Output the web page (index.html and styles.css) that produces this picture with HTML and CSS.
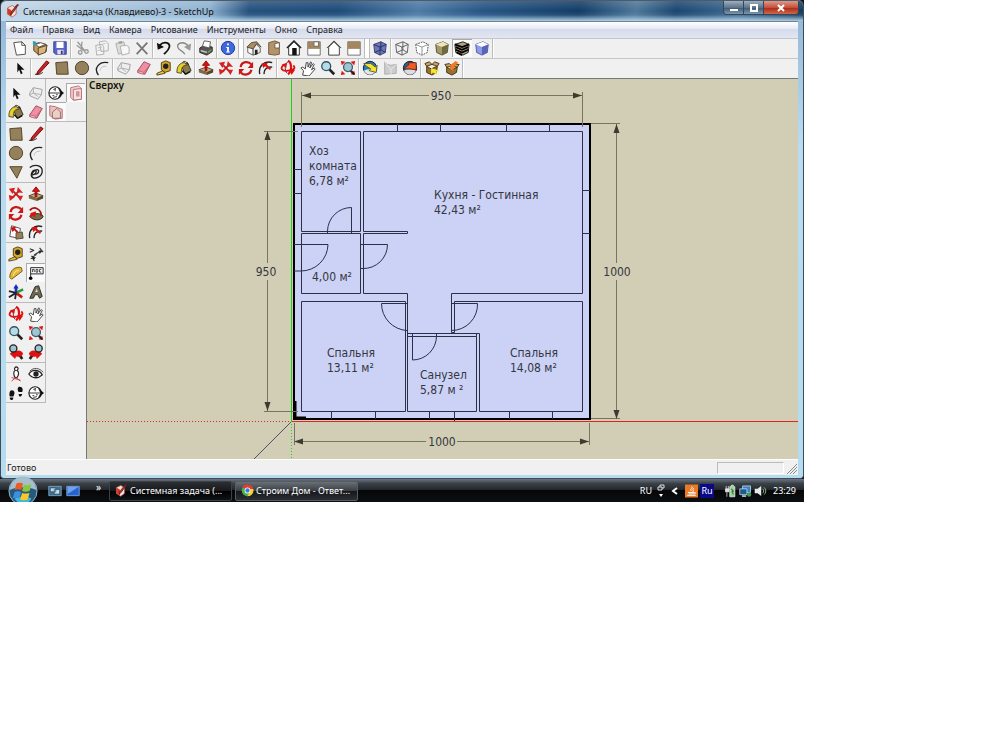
FILE: index.html
```
<!DOCTYPE html>
<html lang="ru">
<head>
    <meta charset="UTF-8">
    <meta name="viewport" content="width=device-width, initial-scale=1.0">
    <title>Системная задача (Клавдиево)-3 - SketchUp</title>
    <link rel="stylesheet" href="styles.css">
</head>
<body>
    <!-- icon set, 18x18 grid -->
    <svg class="sprite" aria-hidden="true">
        <symbol id="i-app" viewBox="0 0 18 18"><path d="M2 5l6-3 5 3v8l-5 4-6-4z" fill="#f6e4de" stroke="#b55"/><path d="M2 5l5 3v8l-5-3z" fill="#d43a22"/><path d="M16 1L9 11l-3 3 1-4 7-9z" fill="#c43a28" stroke="#511"/></symbol>
        <symbol id="i-new" viewBox="0 0 18 18"><path d="M2 3l9-1 4 4v10l-10 1z" fill="#fff" stroke="#444"/><path d="M11 2v4h4" fill="none" stroke="#444"/></symbol>
        <symbol id="i-open" viewBox="0 0 18 18"><path d="M2 6l5-3 9 2v8l-9 3-5-4z" fill="#c39a5b" stroke="#4b3820"/><path d="M4 5l6-2 5 2-7 3z" fill="#fff" stroke="#555"/><path d="M7 9l10-3-2 8-8 3z" fill="#d9b77c" stroke="#4b3820"/><path d="M1 1l4 1-1 5-3-2z" fill="#2a9fb5"/></symbol>
        <symbol id="i-save" viewBox="0 0 18 18"><path d="M2 2h14v14H4l-2-2z" fill="#5a63c8" stroke="#30388c"/><path d="M5 2h8v7H5z" fill="#fff"/><path d="M6 11h7v5H6z" fill="#dde"/><path d="M10 12h2v4h-2z" fill="#30388c"/></symbol>
        <symbol id="i-cut" viewBox="0 0 18 18"><path d="M4 2l8 10M9 2l-1 9M3 6l8 6" fill="none" stroke="#999" stroke-width="1.5"/><circle cx="7" cy="14" r="2" fill="none" stroke="#999" stroke-width="1.5"/><circle cx="14" cy="13" r="2" fill="none" stroke="#999" stroke-width="1.5"/></symbol>
        <symbol id="i-copy" viewBox="0 0 18 18"><path d="M6 2l7-1 3 3v8l-8 1zM2 6l7-1 2 3v8l-8 1z" fill="#f4f4f4" stroke="#aaa"/><path d="M4 9l5-1M4 12l5-1M8 5l5-1" stroke="#bbb"/></symbol>
        <symbol id="i-paste" viewBox="0 0 18 18"><path d="M2 4l9-2 3 11-9 3z" fill="#ddd" stroke="#aaa"/><path d="M7 7l7-1 3 2v7l-8 2z" fill="#f8f8f8" stroke="#aaa"/><path d="M5 2l4-1v3H5z" fill="#999"/></symbol>
        <symbol id="i-del" viewBox="0 0 18 18"><path d="M3 3l12 13M15 3L3 16" stroke="#777" stroke-width="2"/></symbol>
        <symbol id="i-undo" viewBox="0 0 18 18"><path d="M4 6c6-6 12-2 11 2s-4 6-6 8" fill="none" stroke="#111" stroke-width="2"/><path d="M1 3l1 8 7-3z" fill="#111"/></symbol>
        <symbol id="i-redo" viewBox="0 0 18 18"><path d="M14 7C8 0 1 4 2 8s5 3 8 8" fill="none" stroke="#888" stroke-width="1.5"/><path d="M17 4l-1 8-7-4z" fill="#999"/></symbol>
        <symbol id="i-print" viewBox="0 0 18 18"><path d="M2 9l5-3 9 2v5l-6 4-8-3z" fill="#555" stroke="#222"/><path d="M5 7l2-6 7 1-1 7z" fill="#fff" stroke="#555"/><path d="M3 11l7 2v2l-7-2z" fill="#bbb"/><path d="M11 13l4-3v2l-4 3z" fill="#7a9a4a"/></symbol>
        <symbol id="i-info" viewBox="0 0 18 18"><circle cx="9" cy="9" r="7.5" fill="#3d68e0" stroke="#1d358f"/><path d="M8 4h2v2H8zM7 8h3v5h1v1H7v-1h1V9H7z" fill="#fff"/></symbol>
        <symbol id="i-iso" viewBox="0 0 18 18"><path d="M2 8v6l6 3V9z" fill="#fff" stroke="#555"/><path d="M8 9l4-4 4 4v5l-8 3z" fill="#eee" stroke="#555"/><path d="M1 8l5-5 6-1 5 6-5-4-4 6z" fill="#a78c66" stroke="#554430"/><path d="M10 11h3v5l-3 1z" fill="#222"/></symbol>
        <symbol id="i-top" viewBox="0 0 18 18"><path d="M3 3l7-2 5 2v13l-5 1-7-1z" fill="#b3946a" stroke="#6a5436"/><path d="M10 4l5-1v6h-5z" fill="#fff" stroke="#6a5436"/></symbol>
        <symbol id="i-front" viewBox="0 0 18 18"><path d="M3 8l6-6 6 6v9H3z" fill="#fff" stroke="#222"/><path d="M1 9l8-8 8 8" fill="none" stroke="#222" stroke-width="1.5"/><path d="M7 9h5v8H7z" fill="#111"/></symbol>
        <symbol id="i-right" viewBox="0 0 18 18"><path d="M2 2h14v15H2z" fill="#fff" stroke="#666"/><path d="M2 2h14v8H2z" fill="#a5875f"/><path d="M9 2h5v5H9z" fill="#fff" stroke="#666"/></symbol>
        <symbol id="i-back" viewBox="0 0 18 18"><path d="M3 8l6-6 6 6v9H3z" fill="#fff" stroke="#333"/><path d="M1 9l8-8 8 8" fill="none" stroke="#333"/></symbol>
        <symbol id="i-left" viewBox="0 0 18 18"><path d="M2 2h14v15H2z" fill="#fff" stroke="#666"/><path d="M2 2h14v8H2z" fill="#a5875f"/></symbol>
        <symbol id="i-xray" viewBox="0 0 18 18"><path d="M2 5l8-3 6 3-1 9-6 3-6-3z" fill="#6d78b8" stroke="#333a6e"/><path d="M2 5l7 3 7-3M9 8v9M10 2v9l-7 3M10 11l5 3" fill="none" stroke="#232a5e"/></symbol>
        <symbol id="i-wire" viewBox="0 0 18 18"><path d="M2 5l8-3 6 3-1 9-6 3-6-3zM2 5l7 3 7-3M9 8v9M10 2v9l-7 3M10 11l5 3" fill="none" stroke="#555"/></symbol>
        <symbol id="i-hidden" viewBox="0 0 18 18"><path d="M2 5l8-3 6 3-1 9-6 3-6-3z" fill="#fff" stroke="#444" stroke-dasharray="2 1"/><path d="M2 5l7 3 7-3M9 8v9" fill="none" stroke="#888"/></symbol>
        <symbol id="i-shade" viewBox="0 0 18 18"><path d="M2 5l8-3 6 3-1 9-6 3-6-3z" fill="#a59a66" stroke="#4d4828"/><path d="M2 5l8-3 6 3-7 3z" fill="#ece6b8"/><path d="M9 8l7-3-1 9-6 3z" fill="#6f6845"/></symbol>
        <symbol id="i-tex" viewBox="0 0 18 18"><path d="M1 5l9-3 7 3-1 9-6 3-8-3z" fill="#b0a080" stroke="#111"/><path d="M1 5l8 3 8-3M2 8l7 3 7-3M2 11l7 3 7-3M3 14l6 3" fill="none" stroke="#000" stroke-width="2"/></symbol>
        <symbol id="i-mono" viewBox="0 0 18 18"><path d="M2 5l8-3 6 3-1 9-6 3-6-3z" fill="#8f9be8" stroke="#4a54a8"/><path d="M2 5l8-3 6 3-7 3z" fill="#fff"/><path d="M9 8l7-3-1 9-6 3z" fill="#5966b8"/></symbol>
        <symbol id="i-select" viewBox="0 0 18 18"><path d="M6 3v11l2-3 2 5 2-1-2-4h4z" fill="#111"/></symbol>
        <symbol id="i-line" viewBox="0 0 18 18"><path d="M4 13L14 1l3 2L6 15l-3 1z" fill="#c22" stroke="#600"/><path d="M1 16c3 1 6 0 9-2" fill="none" stroke="#222"/></symbol>
        <symbol id="i-rect" viewBox="0 0 18 18"><path d="M2 3l13-1 1 14H3z" fill="#94805a" stroke="#4a3b20"/></symbol>
        <symbol id="i-circle" viewBox="0 0 18 18"><circle cx="9" cy="9" r="7.5" fill="#94805a" stroke="#4a3b20"/></symbol>
        <symbol id="i-arc" viewBox="0 0 18 18"><path d="M5 17C-1 9 6 1 16 3" fill="none" stroke="#222" stroke-width="1.5"/><path d="M7 12c0-4 3-5 7-5" fill="none" stroke="#bbb"/></symbol>
        <symbol id="i-comp" viewBox="0 0 18 18"><path d="M2 9l4-6 10 2-1 6-4 5-9-4z" fill="#eee" stroke="#999"/><path d="M6 3v6l9 2M6 9l-4 2M6 9l5 4" fill="none" stroke="#aaa"/></symbol>
        <symbol id="i-erase" viewBox="0 0 18 18"><path d="M2 12l7-10 7 3-6 11-8-2z" fill="#ef8fa6" stroke="#9c4459"/><path d="M2 12l7 2-1 2-6-2zM9 14l7-9" fill="#fbd" stroke="#b66"/></symbol>
        <symbol id="i-tape" viewBox="0 0 18 18"><path d="M6 3l5-2 5 2v9l-6 2-4-3z" fill="#d6a62a" stroke="#4b3908"/><circle cx="11" cy="7" r="3" fill="#222"/><path d="M8 12l-7 3v2l9-2z" fill="#e8c84a" stroke="#4b3908"/></symbol>
        <symbol id="i-paint" viewBox="0 0 18 18"><path d="M6 6l7-3 4 9-7 4z" fill="#887a4c" stroke="#2d2811"/><path d="M1 14c0-7 3-11 9-11l2 3c-5 0-6 3-6 9z" fill="#e7cf2c" stroke="#4a4310"/><path d="M7 3c2-3 6-1 7 3" fill="none" stroke="#222"/><path d="M7 12l4 4 5-3" fill="none" stroke="#111" stroke-width="1.5"/></symbol>
        <symbol id="i-push" viewBox="0 0 18 18"><path d="M1 11l8-3 8 3-7 3z" fill="#c5ae83" stroke="#4b3c20"/><path d="M1 11l9 3v3l-9-3z" fill="#7c6947"/><path d="M10 14l7-3v3l-7 3z" fill="#544527"/><path d="M8 12V6H5l4-5 4 5h-3v6z" fill="#d11" stroke="#900"/></symbol>
        <symbol id="i-move" viewBox="0 0 18 18"><path d="M6 6l6 6M13 5l-8 8" stroke="#c01818" stroke-width="2"/><path d="M1 3l7-1-3 7zM11 1l6 7-7-1zM17 11l-3 6-4-6zM1 10l7 2-6 5z" fill="#d82020"/></symbol>
        <symbol id="i-rotate" viewBox="0 0 18 18"><path d="M3 8c1-7 9-7 12-3M15 11c-1 6-9 7-12 3" fill="none" stroke="#c91818" stroke-width="2.5"/><path d="M17 2v7h-6zM1 17v-7h6z" fill="#c91818"/></symbol>
        <symbol id="i-offset" viewBox="0 0 18 18"><path d="M2 16C0 7 7 0 16 3M7 16c-1-5 3-9 9-8" fill="none" stroke="#222" stroke-width="1.5"/><path d="M4 4l7-1-1 2 5 5-2 1-5-4-2 2z" fill="#d11"/></symbol>
        <symbol id="i-follow" viewBox="0 0 18 18"><path d="M2 13c0-4 14-5 15 0-2 5-11 5-15 0z" fill="#756c45" stroke="#29240f"/><path d="M2 6c5-6 13-1 13 6" fill="none" stroke="#a11" stroke-width="2"/><path d="M3 9l6-2-1 7-2-2-4 2z" fill="#d11"/></symbol>
        <symbol id="i-scale" viewBox="0 0 18 18"><path d="M4 2l10 3-2 11-10-2z" fill="#fff" stroke="#444"/><path d="M9 10l7-1 1 7-8 1z" fill="#94805a" stroke="#544527"/><path d="M3 4l6-1-1 2 4 4-2 1-3-3-2 2z" fill="#c11"/></symbol>
        <symbol id="i-orbit" viewBox="0 0 18 18"><path d="M9 1c4 1 5 12 0 15" fill="none" stroke="#d11" stroke-width="2.5"/><path d="M9 2C5 4 5 12 8 15" fill="none" stroke="#611"/><path d="M5 5c-6 4-3 8 4 7 6 0 9-3 6-6" fill="none" stroke="#d11" stroke-width="2"/><path d="M2 5l6-2-1 6zM11 10l6 1-4 6z" fill="#d11"/></symbol>
        <symbol id="i-pan" viewBox="0 0 18 18"><path d="M3 17l1-5-3-3 2-1 3 2 1-7 2 0v5l3-6 1 1-2 6 4-5 1 1-3 6 3-2 1 1-5 6-2 2z" fill="#fff" stroke="#333"/></symbol>
        <symbol id="i-zoom" viewBox="0 0 18 18"><path d="M10 10l6 6" stroke="#222" stroke-width="3"/><circle cx="7" cy="7" r="5" fill="#b4dce8" stroke="#36505e" stroke-width="1.5"/></symbol>
        <symbol id="i-extents" viewBox="0 0 18 18"><path d="M1 1l5 1-4 4zM17 1l-1 5-4-4zM1 17l1-5 4 4zM17 17l-5-1 4-4z" fill="#d11"/><path d="M11 11l5 5" stroke="#222" stroke-width="2.5"/><circle cx="9" cy="8" r="5" fill="#9cc7d2" stroke="#465a66" stroke-width="1.5"/></symbol>
        <symbol id="i-getmap" viewBox="0 0 18 18"><circle cx="9" cy="9" r="7.5" fill="#2679bb" stroke="#112"/><path d="M2 12c4-2 9-2 14 0-4 6-10 6-14 0z" fill="#dfe8e6"/><path d="M2 4l8 0 5 4 2-2-1 8-8-2 2-2-5-3z" fill="#f7e52d" stroke="#553"/></symbol>
        <symbol id="i-terrain" viewBox="0 0 18 18"><path d="M3 2l3 3 4 1 6-1v10l-13 1z" fill="#ccc" stroke="#aaa"/><path d="M3 2l7 9 6-6M10 11v5" fill="none" stroke="#eee"/></symbol>
        <symbol id="i-place" viewBox="0 0 18 18"><circle cx="9" cy="9" r="7.5" fill="#23648f" stroke="#112"/><path d="M2 12c4-2 9-2 14 0-4 6-10 6-14 0z" fill="#ddd"/><path d="M16 3l-9 0 1 2-6 5 7 0 7 1z" fill="#ef5c24" stroke="#622"/></symbol>
        <symbol id="i-getmod" viewBox="0 0 18 18"><path d="M3 7l5 3 7-3-1 7-5 3-6-3z" fill="#977133" stroke="#3e2b0d"/><path d="M3 7L1 4l5-2 3 3 3-3 5 2-2 3-6-2z" fill="#c9a55e" stroke="#3e2b0d"/><path d="M8 9l9 3-3 1 1 4-5-3-2 2z" fill="#f6e72c"/></symbol>
        <symbol id="i-share" viewBox="0 0 18 18"><path d="M3 8l5 3 7-3-1 6-5 3-6-3z" fill="#977133" stroke="#3e2b0d"/><path d="M3 8L1 5l5-1 3 3 3-2 5 0-2 3-6-1z" fill="#c9a55e" stroke="#3e2b0d"/><path d="M6 10l2-5 5-4 3 2-4 4-2 5z" fill="#ee7b23"/></symbol>
        <symbol id="i-section" viewBox="0 0 18 18"><circle cx="8" cy="9" r="7" fill="#fff" stroke="#222" stroke-width="1.3"/><path d="M1 9h14M8 4v3M6 5l3-1M5 12h2M9 11h2M6 14l4-1" stroke="#222"/><path d="M11 3l7 6-7 6 3-6z" fill="#111"/></symbol>
        <symbol id="i-plane" viewBox="0 0 18 18"><path d="M3 3l9-2 3 3v12l-9 1-3-3z" fill="#f7ced1" stroke="#b56a70"/><path d="M6 5l9-1v12l-9 1z" fill="#f9e3e3" stroke="#b56a70"/><path d="M9 7h4v6H9z" fill="#cc9999"/></symbol>
        <symbol id="i-cutplane" viewBox="0 0 18 18"><path d="M2 2l6 1 8 3v10l-8 1-6-4z" fill="#f1c0c3" stroke="#b0646a"/><path d="M5 9l5-4 4 4v7H5z" fill="#e8d2c4" stroke="#966"/></symbol>
        <symbol id="i-poly" viewBox="0 0 18 18"><path d="M2 3h14L10 16z" fill="#94805a" stroke="#4a3b20"/></symbol>
        <symbol id="i-free" viewBox="0 0 18 18"><path d="M2 4c5-4 14-3 14 4s-8 9-11 7 0-9 3-8 0 6-4 5c3-6 8-7 8-4s-3 4-4 3" fill="none" stroke="#222" stroke-width="1.5"/></symbol>
        <symbol id="i-dim" viewBox="0 0 18 18"><path d="M2 3l5 2M2 7l4-2M7 10l8-5M4 11l3 6M13 2l4 5M3 14l7-5" fill="none" stroke="#333" stroke-width="1.3"/><path d="M5 12l4 1-3 3zM12 5l4 1-3 3z" fill="#222"/></symbol>
        <symbol id="i-prot" viewBox="0 0 18 18"><path d="M2 14C2 6 8 1 15 3l1 4-12 9z" fill="#e2b83b" stroke="#70540d"/><path d="M6 12c0-3 3-6 6-6" fill="none" stroke="#fff4b0"/></symbol>
        <symbol id="i-text" viewBox="0 0 18 18"><path d="M3 3h14v7H3z" fill="#fff" stroke="#111"/><path d="M5 8V5h2v3M9 5h2v3H9zM15 5h-2v3h2" fill="none" stroke="#333"/><path d="M3 10v4" stroke="#111"/><circle cx="3" cy="15" r="2"/></symbol>
        <symbol id="i-axes" viewBox="0 0 18 18"><path d="M9 10V3" stroke="#1a2ac8" stroke-width="3"/><path d="M9 0l3 5H6z" fill="#1a2ac8"/><path d="M9 10l7 5" stroke="#c11" stroke-width="3"/><path d="M9 10l8-4" stroke="#2a9a30" stroke-width="3"/><path d="M1 15l8-5-1 7M1 8l8 2" fill="none" stroke="#223" stroke-width="2"/></symbol>
        <symbol id="i-3dtext" viewBox="0 0 18 18"><path d="M2 16L8 3l4-1 4 12-3 2-2-4H8l-2 4z" fill="#6f6a55" stroke="#25221a"/><path d="M8 9l2-4 1 4z" fill="#ddd"/></symbol>
        <symbol id="i-prev" viewBox="0 0 18 18"><path d="M12 11l4 6" stroke="#222" stroke-width="3"/><path d="M2 11l6-5v2c5-2 8 0 9 3-1 3-4 4-8 3l-1 3z" fill="#d11"/><circle cx="6" cy="5" r="4" fill="#9cc7d2" stroke="#222" stroke-width="1.5"/></symbol>
        <symbol id="i-next" viewBox="0 0 18 18"><path d="M6 11l-4 6" stroke="#222" stroke-width="3"/><path d="M16 11l-6-5v2C5 6 2 8 1 11c1 3 4 4 8 3l1 3z" fill="#d11"/><circle cx="12" cy="5" r="4" fill="#9cc7d2" stroke="#222" stroke-width="1.5"/></symbol>
        <symbol id="i-cam" viewBox="0 0 18 18"><path d="M9 1c3 0 3 3 1 4 3 1 2 6 0 8H8c-2-3-2-7 0-8-1-1-1-3 1-4z" fill="#fff" stroke="#222" stroke-width="1.3"/><path d="M4 17l5-4 5 4M4 13l10 3" fill="none" stroke="#c33"/></symbol>
        <symbol id="i-look" viewBox="0 0 18 18"><path d="M1 9c4-6 12-5 15 1-4 4-11 5-15-1z" fill="#fff" stroke="#222" stroke-width="1.5"/><circle cx="9" cy="9" r="3" fill="#222"/><path d="M2 6c4-5 11-4 15 1" fill="none" stroke="#444"/></symbol>
        <symbol id="i-walk" viewBox="0 0 18 18"><path d="M4 6c4 0 4 4 2 7H2C1 10 2 6 4 6zM2 14h4c0 4-4 4-4 0zM13 2c4 0 4 4 3 6h-4c-2-3-1-6 1-6zM12 10h4c-1 4-4 4-4 0z" fill="#111"/></symbol>
        <symbol id="i-orb" viewBox="0 0 32 32"><circle cx="16" cy="16" r="15" fill="#245a80" stroke="#9fc0d2"/><path d="M2 15a14 14 0 0 1 28 0c-8-4-20-4-28 0z" fill="#a7bfcb"/><path d="M7 24c5 8 14 8 18 0-5-3-13-3-18 0z" fill="#42b8dc"/><path d="M9 8c2-1 5-1 7 0l-2 7c-2-1-5-1-7 0z" fill="#ee5a24"/><path d="M17 9c2 1 5 1 8 0l-2 7c-3 1-6 1-8 0z" fill="#8cc63e"/><path d="M7 17c2-1 5-1 7 0l-2 7c-2-1-5-1-7 0z" fill="#3d8fe0"/><path d="M15 18c2 1 5 1 8 0l-2 7c-3 1-6 1-8 0z" fill="#fbc926"/></symbol>
        <symbol id="i-windows" viewBox="0 0 18 18"><path d="M1 3h16v12H1z" fill="#3d6d94" stroke="#8cb0c8"/><path d="M3 5h7v5H3zM8 7h7v6H8z" fill="#c5dbe6" stroke="#34566f"/></symbol>
        <symbol id="i-desktop" viewBox="0 0 18 18"><path d="M1 3h16v12H1z" fill="#2563d0" stroke="#8cb6e8"/><path d="M2 4h14L2 13z" fill="#70a2ef"/></symbol>
        <symbol id="i-chrome" viewBox="0 0 18 18"><circle cx="9" cy="9" r="8" fill="#4cae4f"/><path d="M2 5a8 8 0 0 1 15 3H9z" fill="#e33b2e"/><path d="M17 7a8 8 0 0 1-8 10l4-8-3-2z" fill="#fbd02d"/><circle cx="9" cy="9" r="4" fill="#fff"/><circle cx="9" cy="9" r="3" fill="#3b78e0"/></symbol>
        <symbol id="i-java" viewBox="0 0 18 18"><path d="M0 0h18v18H0z" fill="#ea7a25"/><path d="M9 3c4 2-4 3 0 6M12 5c-3 2 1 3-1 5M4 11h9M5 13h7M3 15h12M13 11c3 0 2 2-1 2" fill="none" stroke="#fff" stroke-width="1.3"/></symbol>
        <symbol id="i-power" viewBox="0 0 18 18"><path d="M8 3h2V1h3v2h2v14H8z" fill="#9fd0a0" stroke="#e4f4e4"/><path d="M10 6l3 3-2 1 2 4" fill="none" stroke="#2a7a34" stroke-width="1.5"/><path d="M3 2v4M6 2v4M2 6h5v4H2zM4 10v7" stroke="#eee" fill="#ddd"/></symbol>
        <symbol id="i-net" viewBox="0 0 18 18"><path d="M5 2h11v9H5z" fill="#3a83c0" stroke="#d5e8f4"/><path d="M1 6h10v8H1z" fill="#1c5a94" stroke="#d5e8f4"/><path d="M4 16h6" stroke="#d5e8f4" stroke-width="2"/><circle cx="14" cy="14" r="3" fill="#3f9c55"/></symbol>
        <symbol id="i-sound" viewBox="0 0 18 18"><path d="M1 6h4l5-4v14l-5-4H1z" fill="#e8e8e8"/><path d="M12 6c2 2 2 4 0 6M14 4c3 3 3 7 0 10" fill="none" stroke="#9c9" stroke-width="1.2"/></symbol>
    </svg>

    <div class="desktop">
        <main class="window">
            <header class="titlebar">
                <svg class="app-icon"><use href="#i-app"/></svg>
                <h1>Системная задача (Клавдиево)-3 - SketchUp</h1>
                <div class="window-buttons">
                    <button class="min" aria-label="Свернуть"><svg viewBox="0 0 10 10"><path d="M1 6h8v2H1z" fill="#fff"/></svg></button>
                    <button class="max" aria-label="Развернуть"><svg viewBox="0 0 10 10"><path d="M2 2h6v6H2z" fill="none" stroke="#fff" stroke-width="2"/></svg></button>
                    <button class="close" aria-label="Закрыть"><svg viewBox="0 0 10 10"><path d="M2 2l6 6M8 2L2 8" stroke="#fff" stroke-width="2"/></svg></button>
                </div>
            </header>

            <nav class="menu">
                <a href="#">Файл</a>
                <a href="#">Правка</a>
                <a href="#">Вид</a>
                <a href="#">Камера</a>
                <a href="#">Рисование</a>
                <a href="#">Инструменты</a>
                <a href="#">Окно</a>
                <a href="#">Справка</a>
            </nav>

            <div class="toolbar">
                <button aria-label="Создать"><svg><use href="#i-new"/></svg></button>
                <button aria-label="Открыть"><svg><use href="#i-open"/></svg></button>
                <button aria-label="Сохранить"><svg><use href="#i-save"/></svg></button>
                <span class="sep"></span>
                <button aria-label="Вырезать"><svg><use href="#i-cut"/></svg></button>
                <button aria-label="Копировать"><svg><use href="#i-copy"/></svg></button>
                <button aria-label="Вставить"><svg><use href="#i-paste"/></svg></button>
                <button aria-label="Удалить"><svg><use href="#i-del"/></svg></button>
                <span class="sep"></span>
                <button aria-label="Отменить"><svg><use href="#i-undo"/></svg></button>
                <button aria-label="Повторить"><svg><use href="#i-redo"/></svg></button>
                <span class="sep"></span>
                <button aria-label="Печать"><svg><use href="#i-print"/></svg></button>
                <span class="sep"></span>
                <button aria-label="Сведения о модели"><svg><use href="#i-info"/></svg></button>
                <span class="sep wide"></span>
                <button aria-label="Изометрия"><svg><use href="#i-iso"/></svg></button>
                <button aria-label="Сверху"><svg><use href="#i-top"/></svg></button>
                <button aria-label="Спереди"><svg><use href="#i-front"/></svg></button>
                <button aria-label="Справа"><svg><use href="#i-right"/></svg></button>
                <button aria-label="Сзади"><svg><use href="#i-back"/></svg></button>
                <button aria-label="Слева"><svg><use href="#i-left"/></svg></button>
                <span class="sep wide"></span>
                <button aria-label="Рентген"><svg><use href="#i-xray"/></svg></button>
                <span class="sep"></span>
                <button aria-label="Каркас"><svg><use href="#i-wire"/></svg></button>
                <button aria-label="Скрытые линии"><svg><use href="#i-hidden"/></svg></button>
                <button aria-label="Затенение"><svg><use href="#i-shade"/></svg></button>
                <button class="pressed" aria-label="Текстуры"><svg><use href="#i-tex"/></svg></button>
                <button aria-label="Монохромный"><svg><use href="#i-mono"/></svg></button>
                <span class="sep"></span>
            </div>

            <div class="toolbar">
                <button aria-label="Выбрать"><svg><use href="#i-select"/></svg></button>
                <span class="sep"></span>
                <button aria-label="Линия"><svg><use href="#i-line"/></svg></button>
                <button aria-label="Прямоугольник"><svg><use href="#i-rect"/></svg></button>
                <button aria-label="Круг"><svg><use href="#i-circle"/></svg></button>
                <button aria-label="Дуга"><svg><use href="#i-arc"/></svg></button>
                <span class="sep"></span>
                <button aria-label="Создать компонент"><svg><use href="#i-comp"/></svg></button>
                <button aria-label="Ластик"><svg><use href="#i-erase"/></svg></button>
                <button aria-label="Рулетка"><svg><use href="#i-tape"/></svg></button>
                <button aria-label="Заливка"><svg><use href="#i-paint"/></svg></button>
                <span class="sep"></span>
                <button aria-label="Тяни/Толкай"><svg><use href="#i-push"/></svg></button>
                <button aria-label="Переместить"><svg><use href="#i-move"/></svg></button>
                <button aria-label="Повернуть"><svg><use href="#i-rotate"/></svg></button>
                <button aria-label="Смещение"><svg><use href="#i-offset"/></svg></button>
                <span class="sep"></span>
                <button aria-label="Орбита"><svg><use href="#i-orbit"/></svg></button>
                <button aria-label="Панорама"><svg><use href="#i-pan"/></svg></button>
                <button aria-label="Лупа"><svg><use href="#i-zoom"/></svg></button>
                <button aria-label="В размер окна"><svg><use href="#i-extents"/></svg></button>
                <span class="sep"></span>
                <button aria-label="Получить вид"><svg><use href="#i-getmap"/></svg></button>
                <button aria-label="Рельеф"><svg><use href="#i-terrain"/></svg></button>
                <button aria-label="Поместить модель"><svg><use href="#i-place"/></svg></button>
                <span class="sep"></span>
                <button aria-label="Получить модели"><svg><use href="#i-getmod"/></svg></button>
                <button aria-label="Поделиться моделью"><svg><use href="#i-share"/></svg></button>
                <span class="sep"></span>
            </div>

            <div class="workspace">
                <aside class="sidebar">
                    <div class="palette">
                        <div class="tools">
                            <button aria-label="Выбрать"><svg><use href="#i-select"/></svg></button>
                            <button aria-label="Создать компонент"><svg><use href="#i-comp"/></svg></button>
                            <button aria-label="Заливка"><svg><use href="#i-paint"/></svg></button>
                            <button aria-label="Ластик"><svg><use href="#i-erase"/></svg></button>
                        </div>
                        <div class="tools">
                            <button aria-label="Прямоугольник"><svg><use href="#i-rect"/></svg></button>
                            <button aria-label="Линия"><svg><use href="#i-line"/></svg></button>
                            <button aria-label="Круг"><svg><use href="#i-circle"/></svg></button>
                            <button aria-label="Дуга"><svg><use href="#i-arc"/></svg></button>
                            <button aria-label="Многоугольник"><svg><use href="#i-poly"/></svg></button>
                            <button aria-label="От руки"><svg><use href="#i-free"/></svg></button>
                        </div>
                        <div class="tools">
                            <button aria-label="Переместить"><svg><use href="#i-move"/></svg></button>
                            <button aria-label="Тяни/Толкай"><svg><use href="#i-push"/></svg></button>
                            <button aria-label="Повернуть"><svg><use href="#i-rotate"/></svg></button>
                            <button aria-label="Ведение"><svg><use href="#i-follow"/></svg></button>
                            <button aria-label="Масштаб"><svg><use href="#i-scale"/></svg></button>
                            <button aria-label="Смещение"><svg><use href="#i-offset"/></svg></button>
                        </div>
                        <div class="tools">
                            <button aria-label="Рулетка"><svg><use href="#i-tape"/></svg></button>
                            <button aria-label="Размеры"><svg><use href="#i-dim"/></svg></button>
                            <button aria-label="Транспортир"><svg><use href="#i-prot"/></svg></button>
                            <button class="pressed" aria-label="Текст"><svg><use href="#i-text"/></svg></button>
                            <button aria-label="Оси"><svg><use href="#i-axes"/></svg></button>
                            <button aria-label="3D текст"><svg><use href="#i-3dtext"/></svg></button>
                        </div>
                        <div class="tools">
                            <button aria-label="Орбита"><svg><use href="#i-orbit"/></svg></button>
                            <button aria-label="Панорама"><svg><use href="#i-pan"/></svg></button>
                            <button aria-label="Лупа"><svg><use href="#i-zoom"/></svg></button>
                            <button aria-label="В размер окна"><svg><use href="#i-extents"/></svg></button>
                            <button aria-label="Предыдущий вид"><svg><use href="#i-prev"/></svg></button>
                            <button aria-label="Следующий вид"><svg><use href="#i-next"/></svg></button>
                        </div>
                        <div class="tools">
                            <button aria-label="Положение камеры"><svg><use href="#i-cam"/></svg></button>
                            <button aria-label="Обзор"><svg><use href="#i-look"/></svg></button>
                            <button aria-label="Прогулка"><svg><use href="#i-walk"/></svg></button>
                            <button aria-label="Сечение"><svg><use href="#i-section"/></svg></button>
                        </div>
                    </div>
                    <div class="palette">
                        <div class="tools">
                            <button aria-label="Сечение"><svg><use href="#i-section"/></svg></button>
                            <button class="pressed" aria-label="Показать сечения"><svg><use href="#i-plane"/></svg></button>
                            <button class="pressed" aria-label="Показать разрезы"><svg><use href="#i-cutplane"/></svg></button>
                        </div>
                    </div>
                </aside>

                <section class="canvas">
                    <svg class="plan" viewBox="87 79 711 380">
                        <!-- axes -->
                        <path class="green" d="M291.5 79V421"/>
                        <path class="green dotted" d="M291.5 421V459"/>
                        <path class="red dotted" d="M87 421.5H291"/>
                        <path class="blue" d="M291 422L254 459"/>
                        <rect class="outer" x="294" y="124" width="296" height="295"/>
                        <path class="red" d="M292 421.5H798"/>
                        <path class="corner" d="M295 401V418H306"/>

                        <!-- walls -->
                        <path class="wall" d="M301.5 131.5H360.5V231.5H301.5ZM301.5 233.5H360.5V293.5H301.5Z
                            M363.5 231.5V131.5H582.5V293.5H451.5V332.5M363.5 231.5H407.5V233.5H363.5V293.5H407.5V411.5
                            M301.5 301.5H405.5V411.5H301.5ZM407.5 333.5H479.5V411.5H582.5V301.5H454.5V332.5
                            M407.5 336.5H476.5V411.5H407.5M476.5 336.5V333.5M451.5 332.5H454.5"/>
                        <!-- windows -->
                        <path class="wall" d="M397.5 124V131M440.5 124V131M506.5 124V131M549.5 124V131
                            M583 190.5H590M583 233.5H590M294 169.5H301M294 193.5H301
                            M331.5 412V419M375.5 412V419M429.5 412V419M454.5 412V421M509.5 412V419M552.5 412V419"/>
                        <!-- doors -->
                        <path class="door" d="M351.5 233V207.5A24 24 0 0 0 327.5 231V233
                            M294 244.5H328A27 27 0 0 1 301 271H294
                            M361 244.5H387.5A24 24 0 0 1 363 268.5H361
                            M407 303.5H381.5A27 27 0 0 0 407 330.5
                            M451 303.5H477.5A26 26 0 0 1 451 330.5
                            M412.5 333V360A24 24 0 0 0 436.5 336V333"/>

                        <!-- dimensions -->
                        <path class="dim" d="M302 95.5H429M454 95.5H583M301.5 92V127M582.5 92V127
                            M267.5 131V263M267.5 280V411M264 131.5H298M264 411.5H298
                            M616.5 124V263M616.5 280V419M591 123.5H620M591 418.5H620
                            M295 441.5H426M457 441.5H590M294.5 423V445M589.5 423V445"/>
                        <path class="arrow" d="M302 95.5l9-3v6zM582 95.5l-9-3v6zM267.5 131l-3 9h6zM267.5 411l-3-9h6z
                            M616.5 124l-3 9h6zM616.5 419l-3-9h6zM294 441.5l9-3v6zM589 441.5l-9-3v6z"/>
                        <g class="size">
                            <text x="441" y="100">950</text>
                            <text x="266" y="276">950</text>
                            <text x="617" y="276">1000</text>
                            <text x="442" y="446">1000</text>
                        </g>

                        <g class="room">
                            <text x="309" y="155">Хоз</text>
                            <text x="309" y="170">комната</text>
                            <text x="309" y="185">6,78 м²</text>
                            <text x="434" y="199">Кухня - Гостинная</text>
                            <text x="434" y="214">42,43 м²</text>
                            <text x="312" y="281">4,00 м²</text>
                            <text x="327" y="357">Спальня</text>
                            <text x="327" y="372">13,11 м²</text>
                            <text x="420" y="379">Санузел</text>
                            <text x="420" y="394">5,87 м ²</text>
                            <text x="510" y="357">Спальня</text>
                            <text x="510" y="372">14,08 м²</text>
                        </g>
                        <text class="view-name" x="89" y="89">Сверху</text>
                    </svg>
                </section>
            </div>

            <footer class="statusbar">
                <span>Готово</span>
                <output class="measure"></output>
                <svg class="grip" viewBox="0 0 12 12"><path d="M11 1L1 11M11 4L4 11M11 7L7 11" stroke="#8a8a8a"/></svg>
            </footer>
        </main>

        <div class="taskbar">
            <button class="start" aria-label="Пуск"><svg><use href="#i-orb"/></svg></button>
            <div class="quick">
                <button aria-label="Переключение между окнами"><svg><use href="#i-windows"/></svg></button>
                <button aria-label="Свернуть все окна"><svg><use href="#i-desktop"/></svg></button>
            </div>
            <span class="more">»</span>
            <button class="task active"><svg><use href="#i-app"/></svg>Системная задача (...</button>
            <button class="task"><svg><use href="#i-chrome"/></svg>Строим Дом - Ответ...</button>
            <div class="tray">
                <span class="lang">RU</span>
                <svg class="restore" viewBox="0 0 8 16"><path d="M1 4h4v3H1zM3 4V2h4v3H5" fill="none" stroke="#ddd"/><path d="M2 11h4l-2 3z" fill="#fff"/></svg>
                <svg class="arrow-left" viewBox="0 0 8 16"><path d="M6 5L2 8l4 3" fill="none" stroke="#fff" stroke-width="2"/></svg>
                <svg><use href="#i-java"/></svg>
                <span class="switcher">Ru</span>
                <svg><use href="#i-power"/></svg>
                <svg><use href="#i-net"/></svg>
                <svg><use href="#i-sound"/></svg>
                <time>23:29</time>
            </div>
        </div>
    </div>
</body>
</html>
```
FILE: styles.css
```
:root {
    --face: #f0f0f0;
    --line: #a8a8a8;
    --canvas: #d1ceb5;
    --floor: #cbd2f5;
    --ink: #2b3048;
}

* {
    margin: 0;
    padding: 0;
    box-sizing: border-box;
}

body {
    background-color: #fff;
    color: #222;
    font-family: "Noto Sans", "Open Sans", sans-serif;
    font-size: 9px;
}

button {
    display: flex;
    align-items: center;
    justify-content: center;
    border: none;
    background: none;
    color: inherit;
    font: inherit;
}

a {
    color: inherit;
    text-decoration: none;
}

.sprite {
    display: none;
}

.desktop {
    width: 80.4%;
    background-color: #10151c;
}

/* Window frame */
.window {
    padding: 0 5px 3px;
    background: linear-gradient(#8fb4d4, #b9dcf0 30%, #b5dcee);
    border: solid #3c4c5c;
    border-width: 0 1px 1px;
    border-radius: 6px 6px 4px 4px;
}

.titlebar {
    display: flex;
    align-items: center;
    height: 21px;
    margin: 0 -5px;
    padding-left: 5px;
    border-top: 1px solid #4e5a66;
    border-radius: 6px 6px 0 0;
    background:
        linear-gradient(rgba(255, 255, 255, 0.15), transparent 50%, rgba(190, 220, 240, 0.1) 70%, rgba(190, 220, 240, 0.9)),
        linear-gradient(100deg, #c4d8e8 0%, #a9c4dc 15%, #8fb2d0 26%, #24507c 31%, #1d4a78 42%, #4d7aa5 52%, #265583 60%, #123c66 72%, #4d7698 79%, #1b4670 84%, #3f6a90 92%, #123a58);
}

.app-icon {
    width: 14px;
    height: 14px;
}

.titlebar h1 {
    margin-left: 3px;
    font-size: 9px;
    font-weight: 400;
    color: #111;
}

.window-buttons {
    display: flex;
    align-self: flex-start;
    margin: 0 4px 0 auto;
    border: 1px solid #33475c;
    border-top: none;
    border-radius: 0 0 4px 4px;
    overflow: hidden;
}

.window-buttons button {
    width: 20px;
    height: 13px;
    background: linear-gradient(#9fb0c2, #5d7489 50%, #3c566f 51%, #7c98b0);
    border-right: 1px solid #33475c;
}

.window-buttons .close {
    width: 34px;
    border: none;
    background: linear-gradient(#dc9a8c, #c4503c 50%, #a82813 51%, #d2664a);
}

.window-buttons svg {
    width: 10px;
    height: 10px;
}

/* Menu and toolbars */
.menu {
    display: flex;
    gap: 9px;
    height: 17px;
    padding-left: 4px;
    line-height: 16px;
    border-top: 1px solid #6f8494;
    background: linear-gradient(#fff, #e4e8f5 45%, #d6dbec 46%, #e2e6f2);
}

.toolbar {
    display: flex;
    height: 20px;
    padding-left: 4px;
    background-color: var(--face);
    border-top: 1px solid #c6c6c6;
}

.toolbar button {
    width: 20px;
    height: 18px;
}

.toolbar svg,
.tools svg {
    width: 16px;
    height: 16px;
}

.sep {
    width: 2px;
    border-left: 1px solid #bcbcbc;
    border-right: 1px solid #fff;
}

.sep.wide {
    width: 6px;
    border: solid #bcbcbc;
    border-width: 0 1px;
    background-color: #fff;
}

.pressed {
    background-color: #fafafa;
    box-shadow: inset 1px 1px #aaa;
}

/* Workspace */
.workspace {
    display: flex;
    align-items: stretch;
    background-color: var(--face);
}

.sidebar {
    display: flex;
    align-items: flex-start;
    width: 81px;
    border-top: 1px solid var(--line);
    border-right: 1px solid #777;
}

.palette {
    padding-top: 4px;
    border-right: 1px solid #bbb;
    border-bottom: 1px solid #bbb;
}

.palette + .palette {
    flex: 1;
    border-right: none;
}

.tools {
    display: grid;
    grid-template-columns: 20px 19px;
    grid-auto-rows: 19px;
}

.tools + .tools {
    margin-top: 1px;
    padding-top: 1px;
    border-top: 1px solid #bbb;
}

.canvas {
    flex: 1;
    min-width: 0;
    background-color: var(--canvas);
    border-top: 1px solid #777;
}

.plan {
    display: block;
    width: 100%;
}

.plan path {
    fill: none;
}

.outer {
    fill: var(--floor);
    stroke: #000;
    stroke-width: 2;
}

.corner {
    stroke: #000;
    stroke-width: 3;
}

.wall,
.door {
    stroke: var(--ink);
}

.plan .green {
    stroke: #1fd01f;
}

.plan .red {
    stroke: #e02424;
}

.plan .blue {
    stroke: #50506c;
}

.plan .dotted {
    stroke-dasharray: 1 2;
}

.plan .dim {
    stroke: #77755f;
}

.plan .arrow {
    fill: #3c3b30;
}

.size,
.room {
    font-family: "DejaVu Sans Condensed", "DejaVu Sans", sans-serif;
    font-size: 12px;
    fill: #35363f;
}

.size {
    text-anchor: middle;
}

.view-name {
    font-size: 10px;
    font-weight: 600;
    fill: #111;
}

.statusbar {
    display: flex;
    align-items: center;
    height: 16px;
    padding-left: 1px;
    background-color: var(--face);
    border-top: 1px solid #fff;
}

.measure {
    width: 67px;
    height: 12px;
    margin-left: auto;
    border: 1px solid #bbb;
    border-right-color: #fff;
    border-bottom-color: #fff;
}

.grip {
    align-self: flex-end;
    width: 12px;
    height: 12px;
    margin-left: 2px;
}

/* Taskbar */
.taskbar {
    display: flex;
    align-items: center;
    height: 23px;
    padding: 0 8px 0 7px;
    color: #fff;
    background: linear-gradient(#6c7680, #3a4047 20%, #23272c 48%, #050607 50%, #0c0f12);
}

.start {
    height: 23px;
}

.start svg {
    width: 32px;
    height: 30px;
}

.quick {
    display: flex;
    gap: 4px;
    margin-left: 9px;
}

.quick svg {
    width: 14px;
    height: 14px;
}

.more {
    width: 12px;
    margin: 0 1px 8px 16px;
    font-size: 10px;
    line-height: 10px;
}

.task {
    flex: 0 1 123px;
    justify-content: flex-start;
    gap: 2px;
    height: 20px;
    margin-right: 3px;
    padding: 0 5px;
    white-space: nowrap;
    border: 1px solid #565c63;
    border-radius: 2px;
    background: linear-gradient(#6a7076, #383d42 50%, #15181b 51%, #2a2f33);
}

.task.active {
    border-color: #3c4146;
    background: linear-gradient(#2c2f33, #16181a 50%, #000 51%, #101214);
}

.task svg {
    flex: none;
    width: 13px;
    height: 13px;
}

.tray {
    display: flex;
    align-items: center;
    gap: 2px;
    margin-left: auto;
}

.tray svg {
    width: 13px;
    height: 14px;
}

.tray .restore,
.tray .arrow-left {
    width: 8px;
    height: 16px;
}

.lang {
    margin-right: 3px;
}

.tray .arrow-left {
    margin: 0 4px;
}

.switcher {
    width: 14px;
    margin-right: 8px;
    line-height: 14px;
    text-align: center;
    background-color: #0a0a86;
}

.tray time {
    margin-left: 4px;
}
```
